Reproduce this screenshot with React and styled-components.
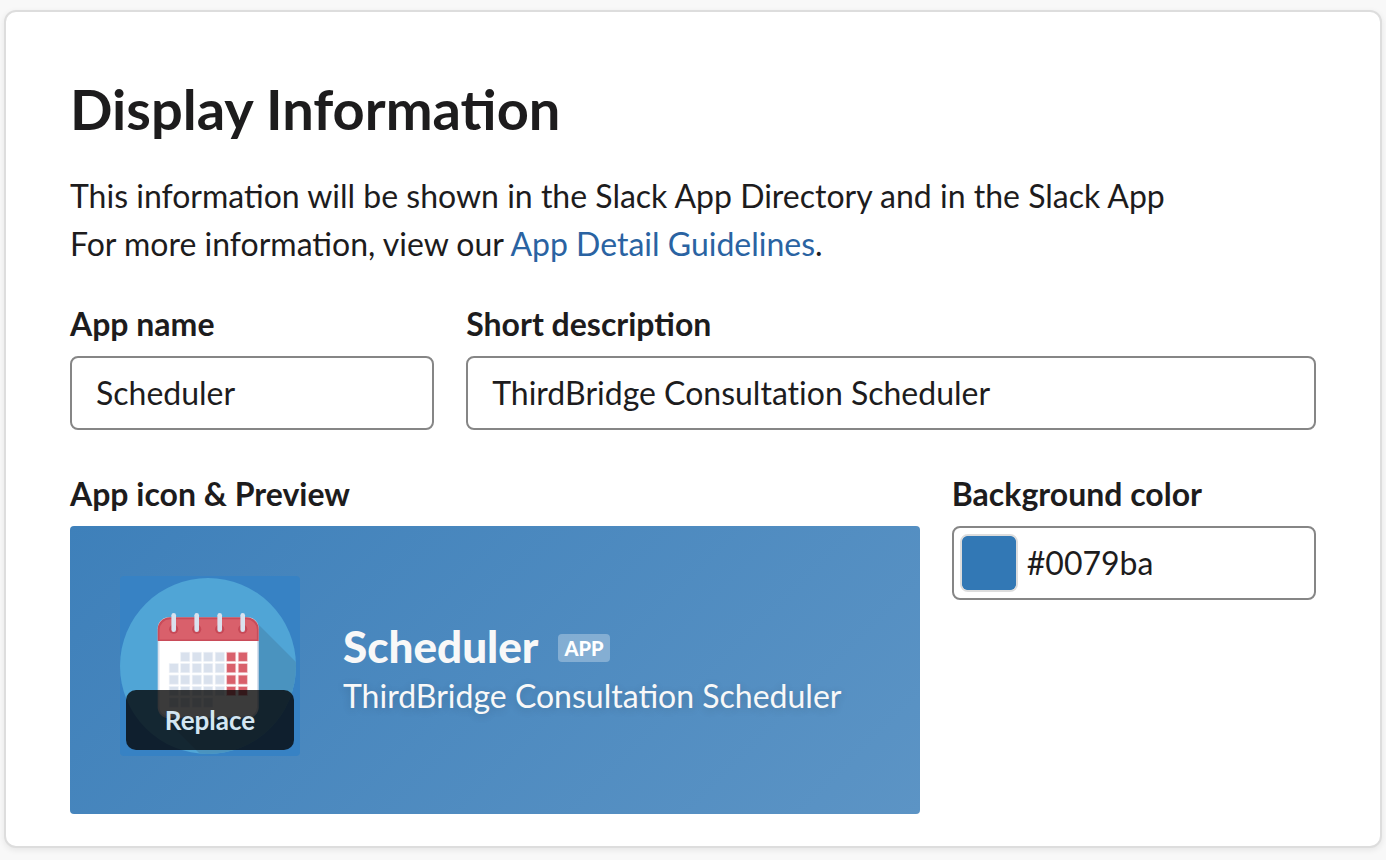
import React, { useState } from "react";
import styled, { createGlobalStyle } from "styled-components";

const GlobalStyle = createGlobalStyle`
  *, *::before, *::after { box-sizing: border-box; }
  body {
    margin: 0;
    background: #f8f8f8;
    color: #1d1c1d;
    font-family: Lato, "Liberation Sans", sans-serif;
    font-size: 32px;
    line-height: 48px;
    -webkit-font-smoothing: antialiased;
  }
`;

const Page = styled.main`
  padding: 10px 4px 12px;
`;

const Card = styled.section`
  padding: 64px 64px 32px;
  background: #fff;
  border: 2px solid #dddddd;
  border-radius: 12px;
  box-shadow: 0 2px 6px rgba(0, 0, 0, 0.08);
`;

const Title = styled.h1`
  margin: 0 0 30px;
  font-size: 56px;
  line-height: 66px;
  font-weight: 700;
`;

const Intro = styled.p`
  margin: 0 0 32px;
`;

const Link = styled.a`
  color: #2a63a2;
  text-decoration: none;

  &:hover { text-decoration: underline; }
`;

const Row = styled.div`
  display: grid;
  grid-template-columns: ${(p) => p.$columns};
  align-items: start;
  gap: 32px;

  & + & { margin-top: 40px; }
`;

const Field = styled.div`
  display: flex;
  flex-direction: column;
  gap: 8px;
  min-width: 0;
`;

const Label = styled.label`
  font-weight: 700;
`;

const PreviewLabel = styled.h2`
  margin: 0;
  font-size: 32px;
  font-weight: 700;
`;

const TextInput = styled.input`
  width: 100%;
  height: 74px;
  padding: 0 24px 2px;
  border: 2px solid #868686;
  border-radius: 8px;
  background: #fff;
  color: inherit;
  font: inherit;
  font-variant-ligatures: none;
`;

const ColorBox = styled.div`
  display: flex;
  align-items: center;
  gap: 9px;
  height: 74px;
  padding: 0 6px;
  border: 2px solid #868686;
  border-radius: 8px;
`;

const Swatch = styled.input`
  flex: none;
  width: 58px;
  height: 58px;
  padding: 0;
  border: 2px solid #dddddd;
  border-radius: 8px;
  background: #3278b5;
  overflow: hidden;

  &::-webkit-color-swatch-wrapper { padding: 0; }
  &::-webkit-color-swatch { border: 0; border-radius: 6px; }
`;

const HexInput = styled.input`
  flex: 1;
  min-width: 0;
  padding: 0;
  border: 0;
  outline: 0;
  background: transparent;
  color: inherit;
  font: inherit;
`;

const Preview = styled.div`
  display: flex;
  align-items: flex-start;
  gap: 43px;
  min-height: 288px;
  padding: 50px;
  border-radius: 4px;
  background: linear-gradient(135deg, #3e80ba, #5c94c5);
  color: #f8f8f8;
`;

const IconFrame = styled.div`
  position: relative;
  flex: none;
  width: 180px;
  height: 180px;
`;

const IconArt = styled.svg`
  display: block;
  width: 100%;
  height: 100%;
  border-radius: 4px;
`;

const ReplaceButton = styled.button`
  position: absolute;
  right: 6px;
  bottom: 6px;
  left: 6px;
  height: 60px;
  padding: 0;
  border: 0;
  border-radius: 10px;
  background: rgba(4, 4, 4, 0.78);
  color: #d3e6f2;
  font: 700 26px/32px Lato, "Liberation Sans", sans-serif;
`;

const PreviewText = styled.div`
  align-self: center;
  min-width: 0;
`;

const PreviewHeading = styled.div`
  display: flex;
  align-items: flex-end;
  gap: 20px;
`;

const PreviewName = styled.strong`
  font-family: "Lato Black", Lato, "Liberation Sans", sans-serif;
  font-size: 44px;
  line-height: 52px;
  font-weight: 900;
`;

const Badge = styled.span`
  margin-bottom: 10px;
  padding: 0 6px;
  border-radius: 4px;
  background: rgba(255, 255, 255, 0.3);
  color: #fff;
  font-family: "Lato Black", Lato, "Liberation Sans", sans-serif;
  font-size: 20px;
  line-height: 28px;
  font-weight: 900;
`;

const PreviewDescription = styled.div`
  text-shadow: 0 2px 8px rgba(0, 0, 0, 0.16);
`;

const rings = [53.7, 76.7, 99.7, 122.7];
const days = [
  [1, 6],
  [0, 6],
  [0, 6],
  [0, 6],
  [0, 3],
].flatMap(([first, last], row) =>
  Array.from({ length: last - first + 1 }, (_, i) => ({ row, col: first + i }))
);

function CalendarIcon() {
  return (
    <IconArt viewBox="0 0 180 180" role="img" aria-label="Calendar">
      <defs>
        <clipPath id="disc">
          <circle cx="88" cy="90" r="88" />
        </clipPath>
      </defs>
      <rect width="180" height="180" fill="#3782c4" />
      <circle cx="88" cy="90" r="88" fill="#50a5d6" />
      <path
        d="M135 45 L200 110 V200 H102 L41 139 Z"
        fill="#4a93bf"
        clipPath="url(#disc)"
      />
      <rect x="37.7" y="41.3" width="101" height="101" rx="11" fill="#d9e0ec" />
      <path d="M39.5 65 H137 V131 a9.5 9.5 0 0 1 -9.5 9.5 H49 a9.5 9.5 0 0 1 -9.5 -9.5 Z" fill="#fff" />
      <path d="M37.7 65 V53.3 a12 12 0 0 1 12 -12 H126.7 a12 12 0 0 1 12 12 V65 Z" fill="#c94b59" />
      <path d="M39.5 63.5 V53.8 a10.5 10.5 0 0 1 10.5 -10.5 H126.4 a10.5 10.5 0 0 1 10.5 10.5 V63.5 Z" fill="#d9606b" />
      {rings.map((x) => (
        <g key={x}>
          <circle cx={x} cy="53.2" r="4.6" fill="#c74856" />
          <rect x={x - 2.3} y="37" width="4.6" height="19" rx="2.3" fill="#dae1ee" />
        </g>
      ))}
      {days.map(({ row, col }) => (
        <rect
          key={`${row}-${col}`}
          x={49.2 + col * 11.5}
          y={76.2 + row * 11.45}
          width="9.1"
          height="9.1"
          fill={col > 4 ? "#d9606b" : "#d9e1ed"}
          stroke={col > 4 ? "#f3ccd1" : "#edf1f7"}
          strokeWidth="0.7"
        />
      ))}
    </IconArt>
  );
}

export default function App() {
  const [name, setName] = useState("Scheduler");
  const [description, setDescription] = useState("ThirdBridge Consultation Scheduler");
  const [hex, setHex] = useState("#0079ba");
  const [swatch, setSwatch] = useState("#3278b5");

  return (
    <>
      <GlobalStyle />
      <Page>
        <Card>
          <Title>Display Information</Title>
          <Intro>
            This information will be shown in the Slack App Directory and in the Slack App
            <br />
            For more information, view our <Link href="#guidelines">App Detail Guidelines</Link>.
          </Intro>
          <Row $columns="3fr 7fr">
            <Field>
              <Label htmlFor="name">App name</Label>
              <TextInput id="name" value={name} onChange={(e) => setName(e.target.value)} />
            </Field>
            <Field>
              <Label htmlFor="description">Short description</Label>
              <TextInput
                id="description"
                value={description}
                onChange={(e) => setDescription(e.target.value)}
              />
            </Field>
          </Row>
          <Row $columns="7fr 3fr">
            <Field>
              <PreviewLabel>App icon &amp; Preview</PreviewLabel>
              <Preview>
                <IconFrame>
                  <CalendarIcon />
                  <ReplaceButton type="button">Replace</ReplaceButton>
                </IconFrame>
                <PreviewText>
                  <PreviewHeading>
                    <PreviewName>{name}</PreviewName>
                    <Badge>APP</Badge>
                  </PreviewHeading>
                  <PreviewDescription>{description}</PreviewDescription>
                </PreviewText>
              </Preview>
            </Field>
            <Field>
              <Label htmlFor="hex">Background color</Label>
              <ColorBox>
                <Swatch
                  type="color"
                  aria-label="Pick a background color"
                  value={swatch}
                  onChange={(e) => {
                    setSwatch(e.target.value);
                    setHex(e.target.value);
                  }}
                />
                <HexInput id="hex" value={hex} onChange={(e) => setHex(e.target.value)} />
              </ColorBox>
            </Field>
          </Row>
        </Card>
      </Page>
    </>
  );
}
